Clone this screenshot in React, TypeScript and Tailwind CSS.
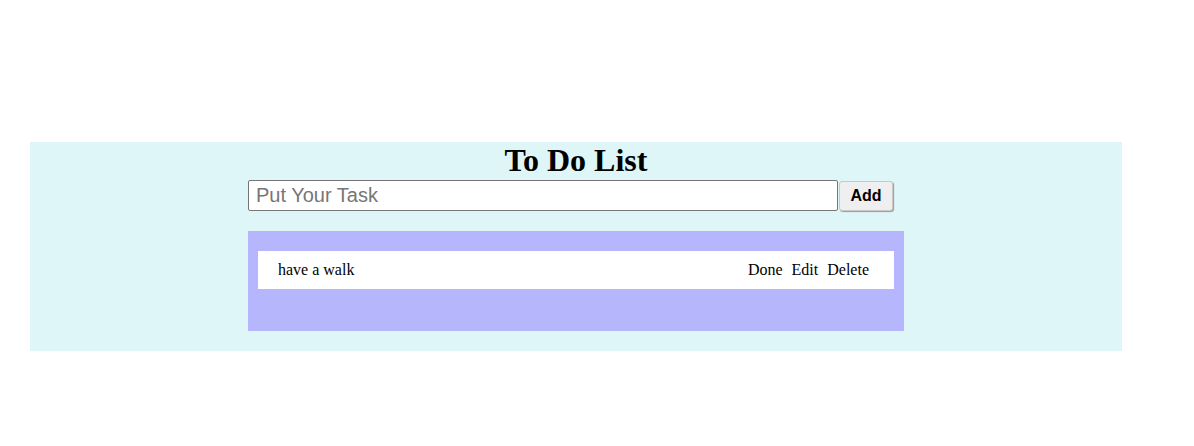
export default function App() {
  const tasks = ["have a walk"];
  return (
    <div className="w-[1194px] h-[446px] bg-white pt-[142px] pl-[30px]">
      <div className="w-[1092px] h-[209px] bg-[#dff6f8] flex flex-col items-center">
        <h1 className="font-['Liberation_Serif',serif] font-bold text-[32px] leading-[37px] text-black">To Do List</h1>
        <div className="w-[656px] flex flex-col">
          <div className="flex items-center mt-[1px]">
            <input
              placeholder="Put Your Task"
              className="w-[590px] h-[31px] border border-[#767676] rounded-[2px] bg-white px-[7px] text-[20px] font-['Liberation_Sans',sans-serif] placeholder:text-[#767676] outline-none"
            />
            <button className="ml-[1px] w-[54px] h-[30px] bg-[#efefef] border border-[#c8c8c8] rounded-[3px] shadow-[1px_1px_1px_#9a9a9a] font-['Liberation_Sans',sans-serif] font-bold text-[16px] text-black">
              Add
            </button>
          </div>
          <div className="mt-[20px] h-[100px] bg-[#b6b6fd] px-[10px] pt-[20px]">
            {tasks.map((t) => (
              <div key={t} className="h-[38px] bg-white flex items-center justify-between pl-[20px] pr-[25px] font-['Liberation_Serif',serif] text-[16px] text-black">
                <span>{t}</span>
                <div className="flex gap-[9px]">
                  <span>Done</span>
                  <span>Edit</span>
                  <span>Delete</span>
                </div>
              </div>
            ))}
          </div>
        </div>
      </div>
    </div>
  );
}
